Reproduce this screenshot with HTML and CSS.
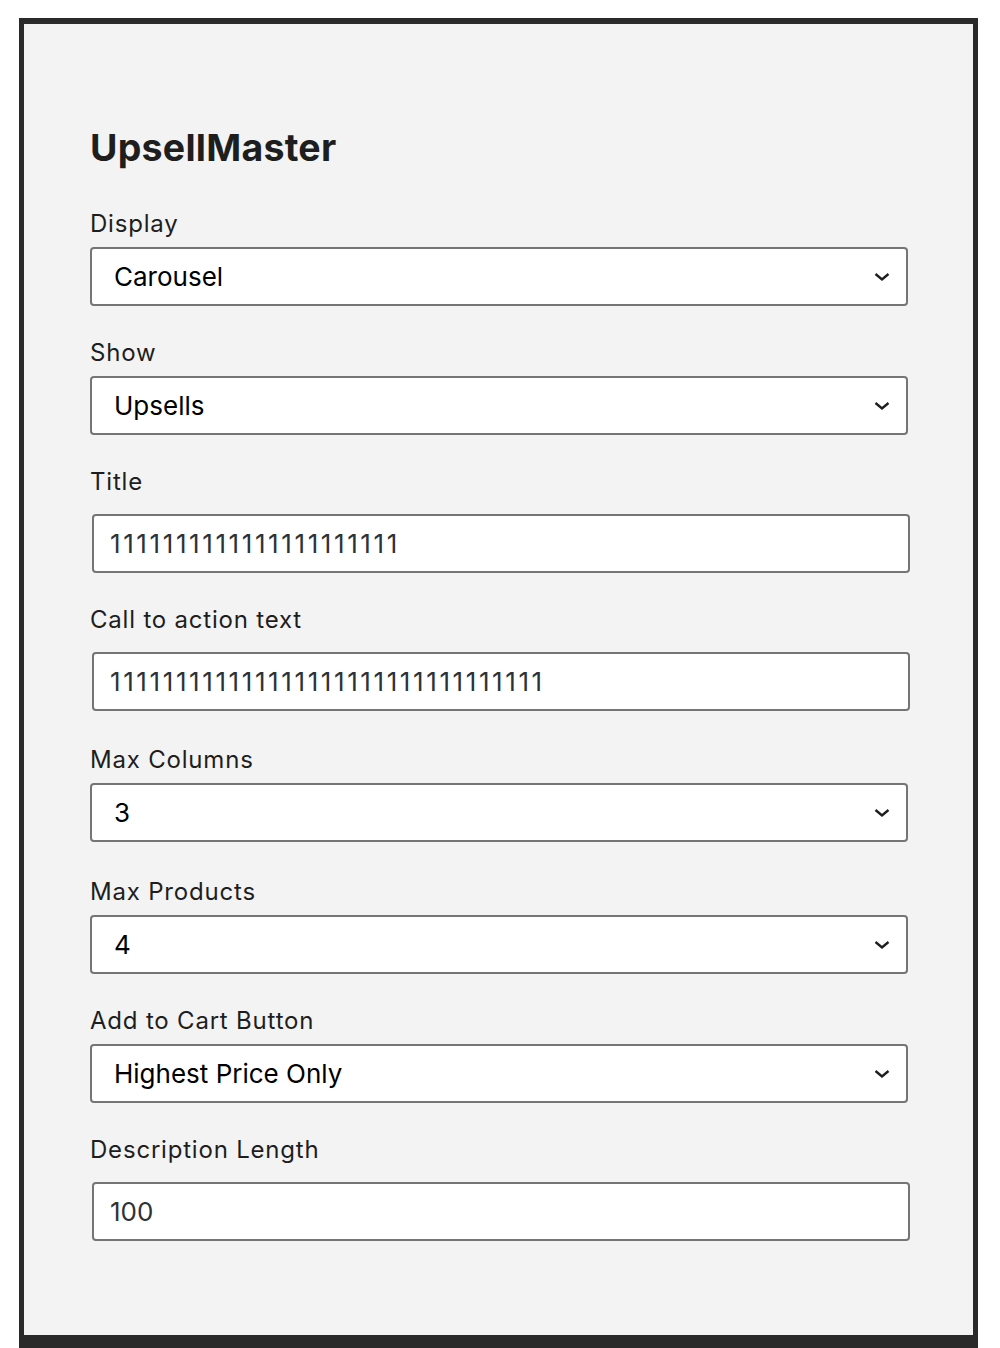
FILE: index.html
```html
<!DOCTYPE html>
<html>
<head>
<meta charset="utf-8">
<link rel="stylesheet" href="styles.css">
</head>
<body>
<div class="frame">
  <div class="panel">
    <h2 class="title">UpsellMaster</h2>

    <div class="field">
      <label class="label">Display</label>
      <div class="select"><span>Carousel</span><svg class="chev" viewBox="0 0 16 10" width="16" height="10"><polyline points="1.5,2 8,7.5 14.5,2" fill="none" stroke="#1e1e1e" stroke-width="2.4"/></svg></div>
    </div>

    <div class="field">
      <label class="label">Show</label>
      <div class="select"><span>Upsells</span><svg class="chev" viewBox="0 0 16 10" width="16" height="10"><polyline points="1.5,2 8,7.5 14.5,2" fill="none" stroke="#1e1e1e" stroke-width="2.4"/></svg></div>
    </div>

    <div class="field input-field">
      <label class="label">Title</label>
      <div class="input"><span class="ones">1111111111111111111111</span></div>
    </div>

    <div class="field input-field gap-lg">
      <label class="label">Call to action text</label>
      <div class="input"><span class="ones">111111111111111111111111111111111</span></div>
    </div>

    <div class="field gap-xl">
      <label class="label">Max Columns</label>
      <div class="select"><span>3</span><svg class="chev" viewBox="0 0 16 10" width="16" height="10"><polyline points="1.5,2 8,7.5 14.5,2" fill="none" stroke="#1e1e1e" stroke-width="2.4"/></svg></div>
    </div>

    <div class="field">
      <label class="label">Max Products</label>
      <div class="select"><span>4</span><svg class="chev" viewBox="0 0 16 10" width="16" height="10"><polyline points="1.5,2 8,7.5 14.5,2" fill="none" stroke="#1e1e1e" stroke-width="2.4"/></svg></div>
    </div>

    <div class="field">
      <label class="label">Add to Cart Button</label>
      <div class="select"><span>Highest Price Only</span><svg class="chev" viewBox="0 0 16 10" width="16" height="10"><polyline points="1.5,2 8,7.5 14.5,2" fill="none" stroke="#1e1e1e" stroke-width="2.4"/></svg></div>
    </div>

    <div class="field input-field">
      <label class="label">Description Length</label>
      <div class="input">100</div>
    </div>
  </div>
</div>
</body>
</html>
```

FILE: styles.css
```css
html, body {
  margin: 0;
  padding: 0;
  background: #ffffff;
  height: 1348px;
  overflow: hidden;
}
body {
  font-family: Inter, "Noto Sans", "Liberation Sans", sans-serif;
  color: #1e1e1e;
}
.frame {
  margin: 18px 0 0 19px;
  width: 959px;
  height: 1330px;
  box-sizing: border-box;
  background: #2a2a2a;
  padding: 6px 5px 13px 5px;
}
.panel {
  background: #f3f3f3;
  height: 100%;
  box-sizing: border-box;
  padding: 102px 65px 0 66px;
}
.title {
  margin: 0 0 43px 0;
  font-size: 37.5px;
  font-weight: 700;
  line-height: 44px;
  color: #1e1e1e;
  letter-spacing: 0.25px;
}
.field {
  margin-bottom: 36px;
}
.field.gap-lg {
  margin-bottom: 38px;
}
.field.gap-xl {
  margin-bottom: 39px;
}
.label {
  display: block;
  font-size: 24px;
  line-height: 22px;
  height: 34px;
  letter-spacing: 0.8px;
  color: #1e1e1e;
}
.input-field .label {
  height: 43px;
}
.select {
  height: 59px;
  box-sizing: border-box;
  border: 2px solid #757575;
  border-radius: 4px;
  background: #fff;
  display: flex;
  align-items: center;
  justify-content: space-between;
  padding: 0 16px 0 22px;
  font-size: 26px;
  color: #000;
}
.input {
  height: 59px;
  box-sizing: border-box;
  border: 2px solid #757575;
  border-radius: 4px;
  background: #fff;
  display: flex;
  align-items: center;
  padding: 0 16px;
  margin: 0 -2px 0 2px;
  font-size: 26px;
  color: #2c3338;
}
.ones {
  letter-spacing: 2.6px;
}
.chev {
  display: block;
}
```
